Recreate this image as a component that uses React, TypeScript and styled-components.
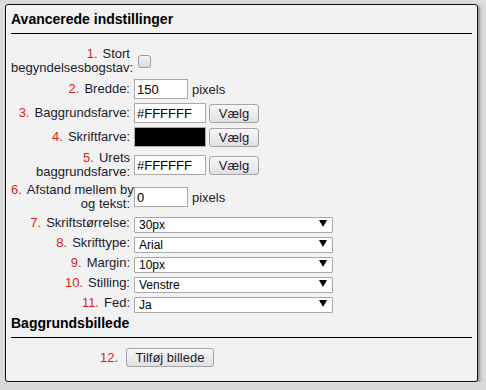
import React from 'react';
import styled, { createGlobalStyle } from 'styled-components';

const GlobalStyle = createGlobalStyle`
    html, body {
        margin: 0;
        padding: 0;
        background: #dadada;
        font-family: Arial, "Liberation Sans", sans-serif;
    }
`;

const Page = styled.div`
    padding: 4px 6px 0 5px;
`;

const Panel = styled.div`
    width: 473px;
    height: 378px;
    box-sizing: border-box;
    background: #f2f2f2;
    border: 1px solid #111;
    border-radius: 3px;
    box-shadow: 2px 2px 3px rgba(0, 0, 0, 0.35);
    padding: 6px 5px 0 5px;
`;

const Heading = styled.div`
    font-size: 14px;
    font-weight: bold;
    color: #000;
    line-height: 17px;
    padding-bottom: 5px;
    border-bottom: 1px solid #000;
`;

const Form = styled.div`
    display: grid;
    grid-template-columns: 119px auto;
    column-gap: 4px;
    row-gap: 4px;
    align-items: center;
    margin: 13px 0 4px 0;
`;

const Label = styled.div`
    font-size: 13px;
    line-height: 14px;
    color: #1b1b2c;
    text-align: right;
    white-space: nowrap;
`;

const Num = styled.span`
    color: #e31b1b;
    margin-right: 5px;
`;

const Field = styled.div`
    display: flex;
    align-items: center;
    gap: 3px;
`;

const TextInput = styled.input<{ $w: number; $bg?: string }>`
    box-sizing: border-box;
    width: ${p => p.$w}px;
    height: 20px;
    margin: 0;
    padding: 1px 2px;
    border: 1px solid #a9a9a9;
    background: ${p => p.$bg || '#fff'};
    font-family: Arial, "Liberation Sans", sans-serif;
    font-size: 13px;
    color: #000;
    outline: none;
`;

const Unit = styled.span`
    font-size: 13px;
    color: #1b1b2c;
    margin-left: 1px;
`;

const Button = styled.button<{ $w: number }>`
    box-sizing: border-box;
    width: ${p => p.$w}px;
    height: 19px;
    padding: 0;
    border: 1px solid #a5a5a5;
    border-radius: 3px;
    background: linear-gradient(#f7f7f7, #e0e0e0);
    font-family: Arial, "Liberation Sans", sans-serif;
    font-size: 13px;
    color: #1b1b2c;
`;

const Checkbox = styled.span`
    display: inline-block;
    width: 11px;
    height: 11px;
    margin-left: 4px;
    border: 1px solid #9a9a9a;
    border-radius: 3px;
    background: linear-gradient(#f4f4f4, #dcdcdc);
`;

const SelectWrap = styled.div`
    position: relative;
    width: 199px;
    height: 16px;
`;

const Select = styled.select`
    box-sizing: border-box;
    width: 100%;
    height: 16px;
    margin: 0;
    padding: 0 0 0 4px;
    border: 1px solid #a9a9a9;
    border-radius: 1px;
    background: #fff;
    appearance: none;
    font-family: Arial, "Liberation Sans", sans-serif;
    font-size: 12px;
    color: #000;
    outline: none;
`;

const Arrow = styled.svg`
    position: absolute;
    right: 6px;
    top: 5px;
    pointer-events: none;
`;

const ImageRow = styled.div`
    display: flex;
    align-items: center;
    margin-top: 10px;
`;

const ImageLabel = styled.div`
    width: 107px;
    text-align: right;
    margin-right: 8px;
    font-size: 13px;
    color: #e31b1b;
`;

const selects = [
    { n: '7.', label: 'Skriftstørrelse:', value: '30px' },
    { n: '8.', label: 'Skrifttype:', value: 'Arial' },
    { n: '9.', label: 'Margin:', value: '10px' },
    { n: '10.', label: 'Stilling:', value: 'Venstre' },
    { n: '11.', label: 'Fed:', value: 'Ja' },
];

const App = () => (
    <Page>
        <GlobalStyle />
        <Panel>
            <Heading>Avancerede indstillinger</Heading>
            <Form>
                <Label><Num>1.</Num>Stort<br />begyndelsesbogstav:</Label>
                <Field><Checkbox /></Field>

                <Label><Num>2.</Num>Bredde:</Label>
                <Field>
                    <TextInput $w={54} defaultValue="150" />
                    <Unit>pixels</Unit>
                </Field>

                <Label><Num>3.</Num>Baggrundsfarve:</Label>
                <Field>
                    <TextInput $w={72} defaultValue="#FFFFFF" />
                    <Button $w={50}>Vælg</Button>
                </Field>

                <Label><Num>4.</Num>Skriftfarve:</Label>
                <Field>
                    <TextInput $w={72} $bg="#000" defaultValue="" />
                    <Button $w={50}>Vælg</Button>
                </Field>

                <Label><Num>5.</Num>Urets<br />baggrundsfarve:</Label>
                <Field>
                    <TextInput $w={72} defaultValue="#FFFFFF" />
                    <Button $w={50}>Vælg</Button>
                </Field>

                <Label><Num>6.</Num>Afstand mellem by<br />og tekst:</Label>
                <Field>
                    <TextInput $w={54} defaultValue="0" />
                    <Unit>pixels</Unit>
                </Field>

                {selects.map(s => (
                    <React.Fragment key={s.n}>
                        <Label><Num>{s.n}</Num>{s.label}</Label>
                        <SelectWrap>
                            <Select defaultValue={s.value}>
                                <option>{s.value}</option>
                            </Select>
                            <Arrow width="8" height="7" viewBox="0 0 8 7">
                                <path d="M0 0 H8 L4 7 Z" fill="#000" />
                            </Arrow>
                        </SelectWrap>
                    </React.Fragment>
                ))}
            </Form>
            <Heading>Baggrundsbillede</Heading>
            <ImageRow>
                <ImageLabel>12.</ImageLabel>
                <Button $w={88}>Tilføj billede</Button>
            </ImageRow>
        </Panel>
    </Page>
);

export default App;
